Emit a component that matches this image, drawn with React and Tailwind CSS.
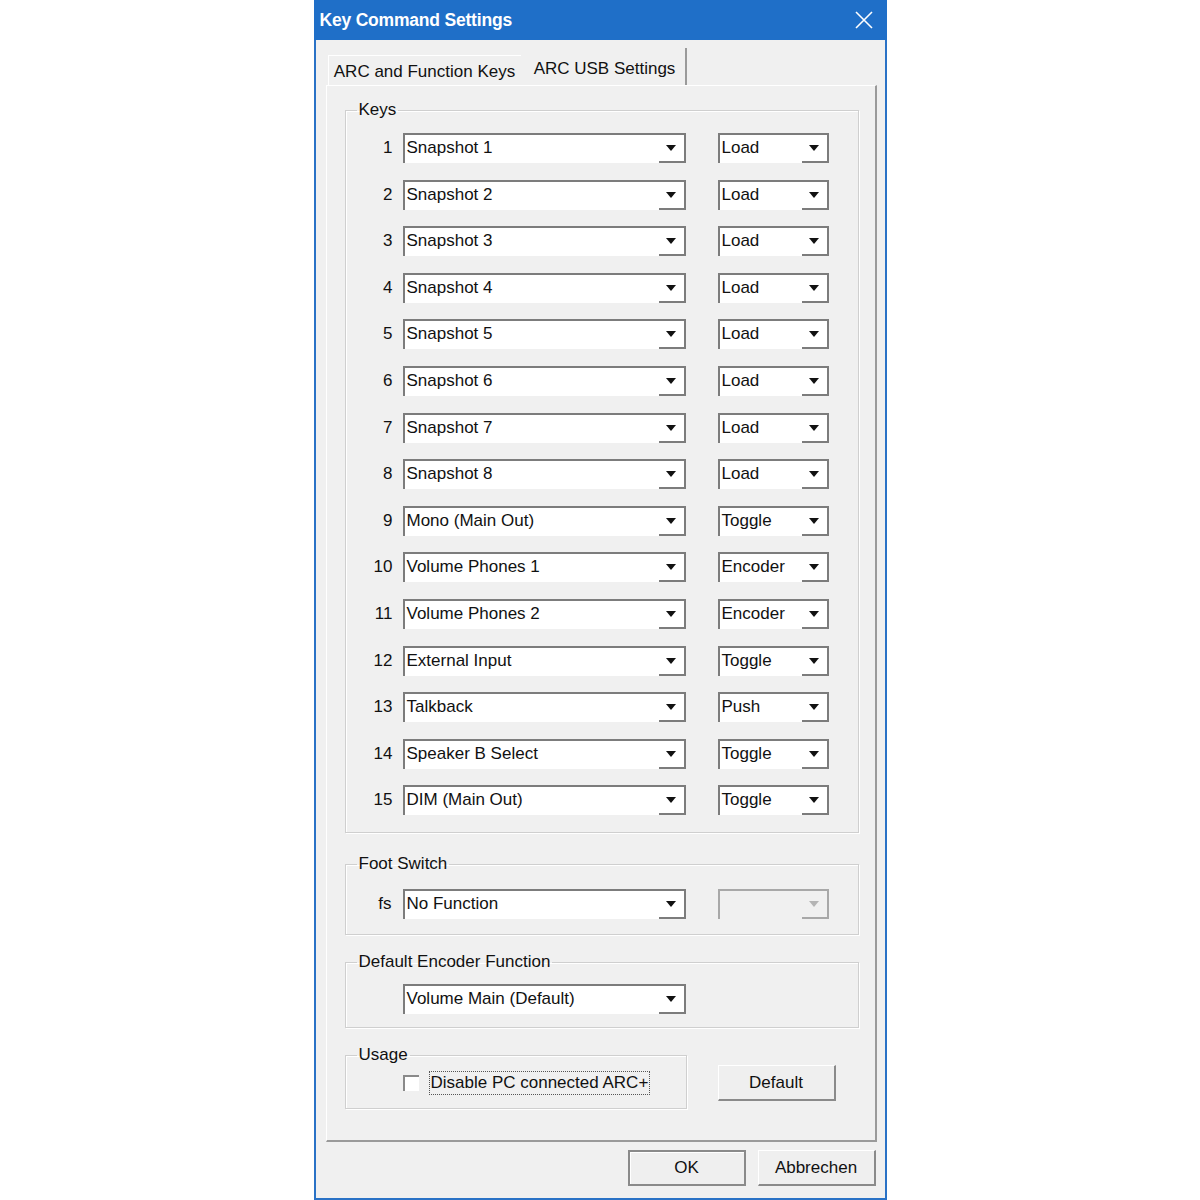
import React from "react";

const rows = [
  ["1", "Snapshot 1", "Load"],
  ["2", "Snapshot 2", "Load"],
  ["3", "Snapshot 3", "Load"],
  ["4", "Snapshot 4", "Load"],
  ["5", "Snapshot 5", "Load"],
  ["6", "Snapshot 6", "Load"],
  ["7", "Snapshot 7", "Load"],
  ["8", "Snapshot 8", "Load"],
  ["9", "Mono (Main Out)", "Toggle"],
  ["10", "Volume Phones 1", "Encoder"],
  ["11", "Volume Phones 2", "Encoder"],
  ["12", "External Input", "Toggle"],
  ["13", "Talkback", "Push"],
  ["14", "Speaker B Select", "Toggle"],
  ["15", "DIM (Main Out)", "Toggle"],
];

function Arrow({ disabled }) {
  return (
    <svg width="10" height="6" viewBox="0 0 10 6">
      <path d="M0 0 H10 L5 6 Z" fill={disabled ? "#b4b4b4" : "#111"} />
    </svg>
  );
}

function Combo({ text, wide, disabled }) {
  return (
    <div
      className={
        wide
          ? "flex h-[30px] w-[283px] shrink-0 border-t-2 border-l-2 border-[#7c7c7c] bg-white"
          : disabled
          ? "flex h-[30px] w-[111px] shrink-0 border-t-2 border-l-2 border-[#a8a8a8] bg-[#f0f0f0]"
          : "flex h-[30px] w-[111px] shrink-0 border-t-2 border-l-2 border-[#7c7c7c] bg-white"
      }
    >
      <div className="flex flex-1 items-center overflow-hidden whitespace-nowrap pl-[2px] pb-[2px]">
        {text}
      </div>
      <div
        className={
          disabled
            ? "flex w-[27px] items-center justify-center border-r-2 border-b-2 border-[#a8a8a8]"
            : "flex w-[27px] items-center justify-center border-r-2 border-b-2 border-[#7c7c7c]"
        }
      >
        <Arrow disabled={disabled} />
      </div>
    </div>
  );
}

function Group({ title, className, children }) {
  return (
    <fieldset
      className={
        "border border-[#cfcfcf] shadow-[inset_1px_1px_0_#ffffff,1px_1px_0_#ffffff] " +
        (className || "")
      }
    >
      <legend className="ml-[11px] px-[2px] leading-[20px]">{title}</legend>
      {children}
    </fieldset>
  );
}

function Button({ label, isDefault, className }) {
  return (
    <div
      className={
        (isDefault
          ? "flex h-[36px] w-[118px] items-center justify-center border-2 border-[#8a8a8a] bg-[#efefef] shadow-[inset_1px_1px_0_#ffffff] "
          : "flex h-[36px] w-[118px] items-center justify-center border-t border-l border-r-2 border-b-2 border-t-[#ffffff] border-l-[#ffffff] border-r-[#8a8a8a] border-b-[#8a8a8a] bg-[#efefef] ") +
        (className || "")
      }
    >
      {label}
    </div>
  );
}

export default function App() {
  return (
    <div className="h-[1200px] w-[1200px] bg-white font-['Liberation_Sans',Arial,sans-serif] text-[17px] leading-[20px] text-[#111]">
      <div className="mx-auto flex h-[1200px] w-[573px] flex-col border-x-2 border-b-2 border-[#2a72c6] bg-[#f0f0f0]">
        {/* Title bar */}
        <div className="-mx-[2px] flex h-[40px] shrink-0 items-center justify-between bg-[#1f6fc8] pl-[6px] pr-[14px] text-white">
          <span className="text-[17.5px] font-bold tracking-[-0.2px]">Key Command Settings</span>
          <svg width="18" height="18" viewBox="0 0 18 18">
            <path d="M1 1 L17 17 M17 1 L1 17" stroke="#ffffff" strokeWidth="1.6" />
          </svg>
        </div>

        <div className="flex flex-1 flex-col pl-[10px] pr-[8px]">
          {/* Tabs */}
          <div className="flex h-[45px] items-end">
            <div className="ml-[2px] flex h-[30px] w-[193px] items-center justify-center border-t border-l border-white pt-[3px]">
              ARC and Function Keys
            </div>
            <div className="ml-[4px] flex h-[37px] w-[162px] items-start justify-center border-r-2 border-[#9a9a9a] pt-[11px]">
              ARC USB Settings
            </div>
          </div>

          {/* Tab panel */}
          <div className="flex h-[1057px] flex-col border-t border-l border-white border-r-2 border-b-2 border-r-[#9a9a9a] border-b-[#9a9a9a] pl-[18px] pr-[16px] pt-[14px]">
            <Group title="Keys" className="pt-[13px] pb-[17px]">
              <div className="flex flex-col gap-[16.6px]">
                {rows.map(([n, f, m]) => (
                  <div key={n} className="flex items-center">
                    <div className="w-[48px] pr-[1px] text-right">{n}</div>
                    <div className="ml-[9px]">
                      <Combo text={f} wide />
                    </div>
                    <div className="ml-[32px]">
                      <Combo text={m} />
                    </div>
                  </div>
                ))}
              </div>
            </Group>

            <Group title="Foot Switch" className="mt-[21px] pt-[15px] pb-[15px]">
              <div className="flex items-center">
                <div className="w-[48px] pr-[2px] text-right">fs</div>
                <div className="ml-[9px]">
                  <Combo text="No Function" wide />
                </div>
                <div className="ml-[32px]">
                  <Combo text="" disabled />
                </div>
              </div>
            </Group>

            <Group title="Default Encoder Function" className="mt-[17px] pt-[12px] pb-[13px]">
              <div className="flex items-center">
                <div className="ml-[57px]">
                  <Combo text="Volume Main (Default)" wide />
                </div>
              </div>
            </Group>

            <div className="mt-[17px] flex items-start">
              <Group title="Usage" className="w-[342px] pt-[4px] pb-[11px]">
                <div className="flex h-[28px] items-center">
                  <div className="ml-[57px] h-[16px] w-[16px] border-t-2 border-l-2 border-[#8a8a8a] bg-white"></div>
                  <div className="ml-[10px] border border-dotted border-[#555] px-[1px] leading-[22px]">
                    Disable PC connected ARC+
                  </div>
                </div>
              </Group>
              <Button label="Default" className="ml-[31px] mt-[20px]" />
            </div>
          </div>

          {/* Bottom buttons */}
          <div className="mt-[8px] flex justify-end gap-[12px] pr-[1px]">
            <Button label="OK" isDefault />
            <Button label="Abbrechen" />
          </div>
        </div>
      </div>
    </div>
  );
}
